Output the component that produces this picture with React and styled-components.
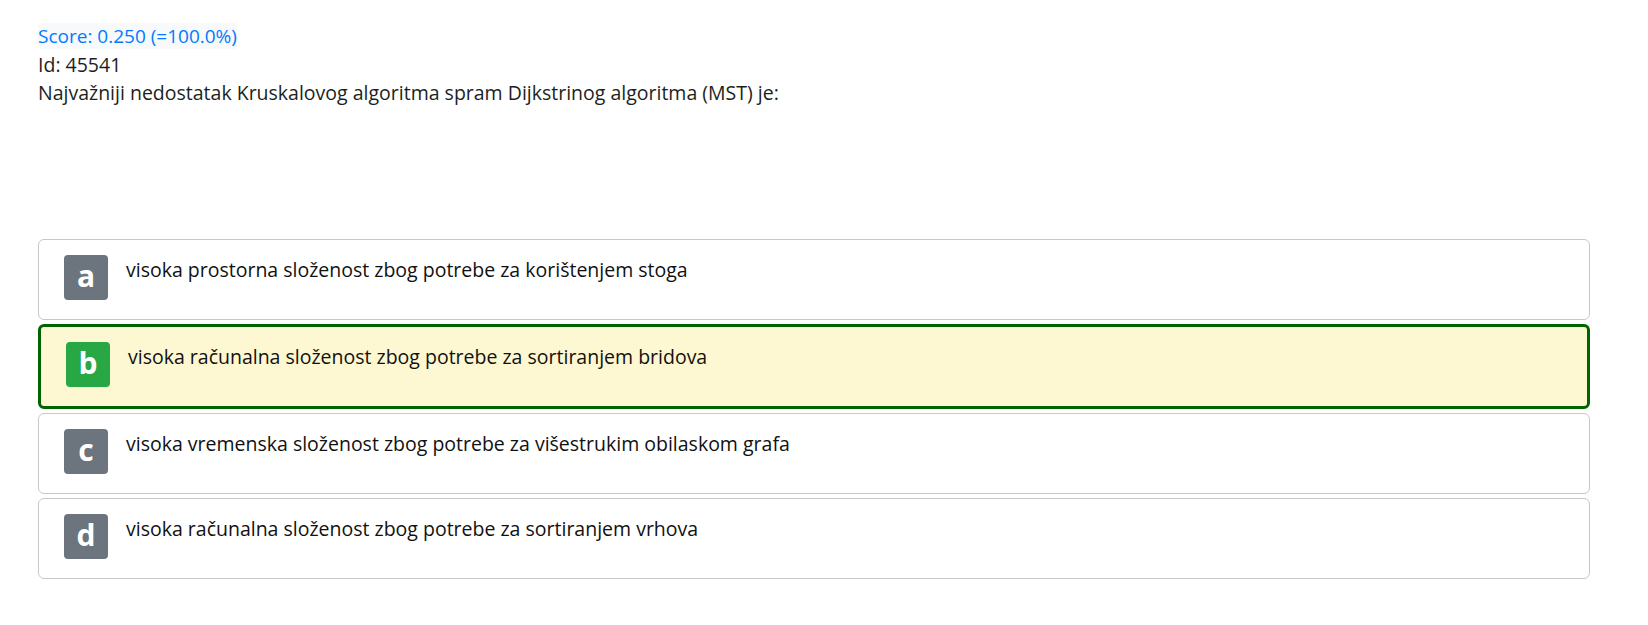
import React from "react";
import styled, { createGlobalStyle } from "styled-components";

const answers = [
  { letter: "a", text: "visoka prostorna složenost zbog potrebe za korištenjem stoga" },
  { letter: "b", text: "visoka računalna složenost zbog potrebe za sortiranjem bridova", correct: true },
  { letter: "c", text: "visoka vremenska složenost zbog potrebe za višestrukim obilaskom grafa" },
  { letter: "d", text: "visoka računalna složenost zbog potrebe za sortiranjem vrhova" },
];

function App() {
  return (
    <>
      <GlobalStyle />
      <StyledPage>
        <StyledHeader>
          <div>
            <StyledScore>Score: 0.250 (=100.0%)</StyledScore>
          </div>
          <div>Id: 45541</div>
          <div>
            Najvažniji nedostatak Kruskalovog algoritma spram Dijkstrinog
            algoritma (MST) je:
          </div>
        </StyledHeader>

        <StyledAnswerList>
          {answers.map((item) => (
            <StyledAnswer key={item.letter} correct={item.correct}>
              <StyledBadge correct={item.correct}>{item.letter}</StyledBadge>
              <StyledAnswerText>{item.text}</StyledAnswerText>
            </StyledAnswer>
          ))}
        </StyledAnswerList>
      </StyledPage>
    </>
  );
}

export default App;

const GlobalStyle = createGlobalStyle`
  body {
    margin: 0;
    background: #ffffff;
    font-family: "Open Sans", "Noto Sans", sans-serif;
    color: #1c1f22;
  }
`;

const StyledPage = styled.div`
  box-sizing: border-box;
  width: 100%;
  padding: 22px 58px 40px 38px;
  font-size: 19.5px;
  line-height: 28.5px;
`;

const StyledHeader = styled.div`
  margin-bottom: 131px;
`;

const StyledScore = styled.span`
  font-size: 19px;
  color: #007bff;
  background: #f8f9fa;
`;

const StyledAnswerList = styled.div`
  display: flex;
  flex-direction: column;
  gap: 4px;
`;

const StyledAnswer = styled.div.withConfig({
  shouldForwardProp: (prop) => prop !== "correct",
})`
  display: flex;
  align-items: flex-start;
  gap: 18px;
  padding: 15px 25px 19px;
  border: ${({ correct }) => (correct ? "3px solid #006400" : "1px solid #c8c8c8")};
  border-radius: 6px;
  background: ${({ correct }) => (correct ? "#fdf8d1" : "#ffffff")};
`;

const StyledBadge = styled.div.withConfig({
  shouldForwardProp: (prop) => prop !== "correct",
})`
  flex: none;
  display: flex;
  align-items: center;
  justify-content: center;
  width: 44px;
  height: 45px;
  border-radius: 4px;
  background: ${({ correct }) => (correct ? "#28a745" : "#6c757d")};
  color: #ffffff;
  font-size: 30px;
  font-weight: 700;
  line-height: 1;
  padding-bottom: 3px;
  box-sizing: border-box;
`;

const StyledAnswerText = styled.div`
  margin-top: 1px;
  color: #111111;
`;
